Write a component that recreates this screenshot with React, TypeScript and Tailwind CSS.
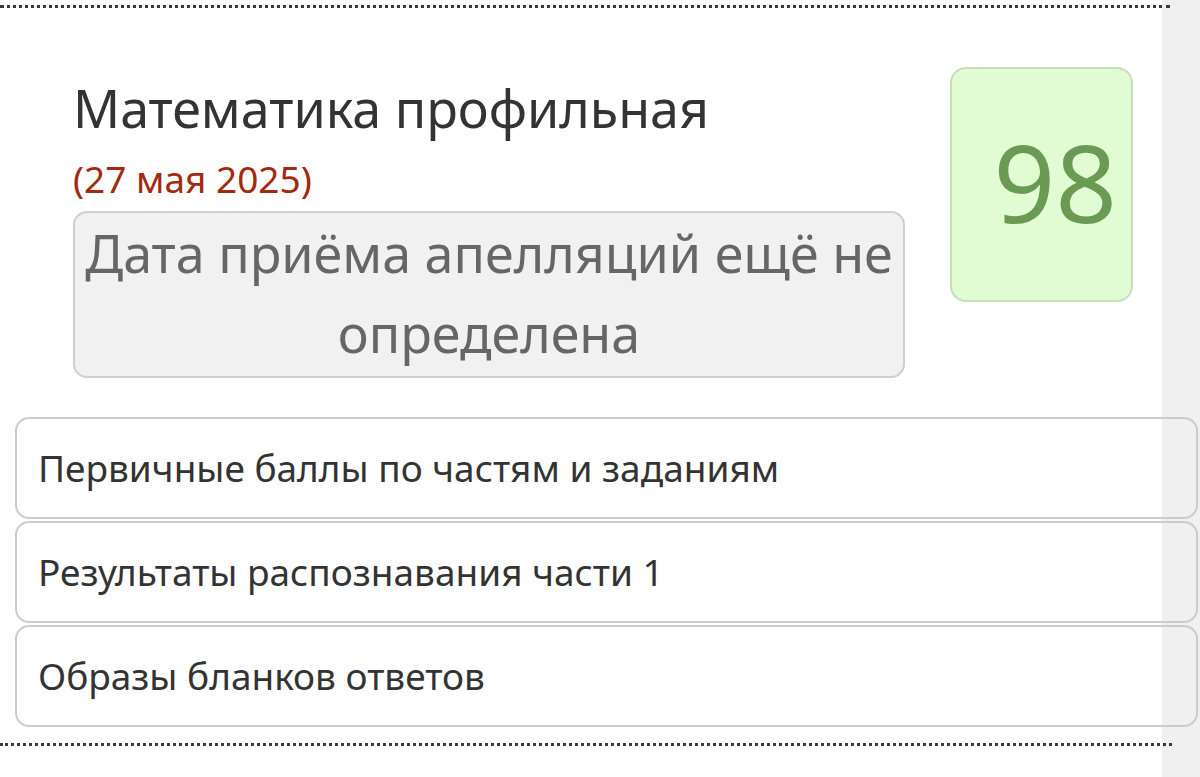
import React from "react";

const font = { fontFamily: '"Noto Sans", "Open Sans", sans-serif' };

const links = [
  "Первичные баллы по частям и заданиям",
  "Результаты распознавания части 1",
  "Образы бланков ответов",
];

export default function App() {
  return (
    <div className="flex min-h-[777px] w-full bg-[#f0f0f0]" style={font}>
      <div className="w-[1162px] shrink-0 bg-white pt-[5px]">
        {/* top dotted rule */}
        <div className="mr-[-8px] border-t-[3px] border-dotted border-[#3a3a3a]" />

        {/* Exam header */}
        <div className="flex items-start pl-[73px] pr-[29px]">
          <div className="w-[832px] pt-[70px]">
            <h1 className="text-[52px] leading-[60px] font-normal text-[#333]">
              Математика профильная
            </h1>
            <div className="mt-[19px] text-[37px] leading-[44px] text-[#a3290f]">
              (27 мая 2025)
            </div>
            <div className="mt-[10px] rounded-[14px] border-2 border-[#cfcfcf] bg-[#f1f1f1] pb-[3px] text-center text-[52px] leading-[80px] text-[#666]">
              Дата приёма апелляций ещё не определена
            </div>
          </div>
          <div className="ml-auto mt-[59px] flex h-[235px] w-[183px] items-start justify-end rounded-[16px] border-2 border-[#c9ddb9] bg-[#e1fcd3] pr-[14px] pt-[53px]">
            <span className="text-[108px] leading-[120px] text-[#6b9a55]">98</span>
          </div>
        </div>

        {/* Detail links */}
        <div className="ml-[15px] mt-[39px] flex w-[1183px] flex-col gap-[2px]">
          {links.map((t) => (
            <div
              key={t}
              className="flex h-[102px] items-center rounded-[14px] border-2 border-[#cccccc] pl-[21px] text-[37px] text-[#333]"
            >
              {t}
            </div>
          ))}
        </div>

        {/* bottom dotted rule */}
        <div className="mr-[-10px] mt-[16px] border-t-[3px] border-dotted border-[#3a3a3a]" />
      </div>
      <div className="flex-1" />
    </div>
  );
}
